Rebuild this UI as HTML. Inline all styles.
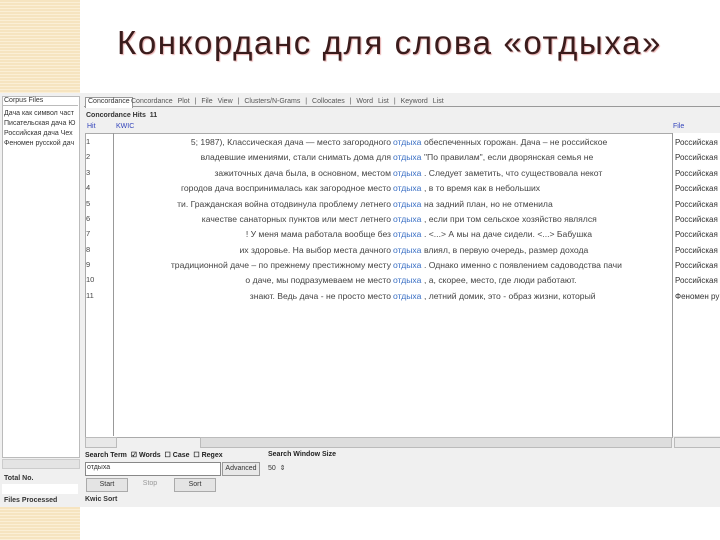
<!DOCTYPE html><html><head><meta charset="utf-8"><style>
body{margin:0;width:720px;height:540px;background:#fff;position:relative;overflow:hidden;font-family:"Liberation Sans",sans-serif}
.abs{position:absolute}
.beige{background:repeating-linear-gradient(180deg,#f6e4c0 0 2px,#fbefd6 2px 3px)}
.t{font-size:7px;color:#333;white-space:nowrap}
.row{position:absolute;left:86px;width:586px;height:15px;font-size:8.6px;color:#444;white-space:nowrap}
.row .n{position:absolute;left:0;font-size:7.5px}
.row .l{position:absolute;right:281px;text-align:right}
.row .k{position:absolute;left:307px;color:#3a6fc4}
.row .r{position:absolute;left:338px;width:246px;overflow:hidden}
.rr{position:absolute;left:675px;font-size:8px;color:#333}
</style></head><body>
<div class="abs beige" style="left:0;top:0;width:80px;height:93px"></div>
<div class="abs beige" style="left:0;top:507px;width:80px;height:33px"></div>
<div class="abs" style="left:117px;top:24px;font-size:33px;color:#3a1c1c;letter-spacing:1.6px;text-shadow:1px 1px 1px #e8b0b0">Конкорданс для слова «отдыха»</div>
<div class="abs" style="left:0;top:93px;width:720px;height:414px;background:#f0f0f0"></div>
<div class="abs" style="left:2px;top:96px;width:76px;height:360px;background:#fff;border:1px solid #bbb"></div>
<div class="abs t" style="left:4px;top:97px">Corpus Files</div>
<div class="abs" style="left:2px;top:105px;width:76px;height:1px;background:#bbb"></div>
<div class="abs t" style="left:4px;top:109px;line-height:10px">Дача как символ част<br>Писательская дача Ю<br>Российская дача Чех<br>Феномен русской дач</div>
<div class="abs" style="left:2px;top:459px;width:76px;height:8px;background:#e4e4e4;border:1px solid #ccc"></div>
<div class="abs t" style="left:4px;top:475px;font-weight:bold">Total No.</div>
<div class="abs" style="left:2px;top:484px;width:76px;height:10px;background:#fff"></div>
<div class="abs t" style="left:4px;top:497px;font-weight:bold">Files Processed</div>
<div class="abs" style="left:84px;top:96px;width:636px;height:10px;border-bottom:1px solid #999"></div>
<div class="abs t" style="left:85px;top:97px;background:#fff;border:1px solid #999;border-bottom:none;padding:0 2px;height:10px">Concordance</div>
<div class="abs t" style="left:131px;top:98px;color:#555;word-spacing:3px">Concordance Plot | File View | Clusters/N-Grams | Collocates | Word List | Keyword List</div>
<div class="abs t" style="left:86px;top:112px;font-weight:bold">Concordance Hits &nbsp;11</div>
<div class="abs t" style="left:87px;top:123px;color:#3344bb">Hit</div>
<div class="abs t" style="left:116px;top:123px;color:#3344bb">KWIC</div>
<div class="abs t" style="left:673px;top:123px;color:#3344bb">File</div>
<div class="abs" style="left:85px;top:133px;width:586px;height:303px;background:#fff;border:1px solid #aaa"></div>
<div class="abs" style="left:113px;top:133px;width:1px;height:303px;background:#999"></div>
<div class="abs" style="left:672px;top:133px;width:48px;height:303px;background:#fff;border-left:1px solid #999"></div>
<div class="row" style="top:137px"><span class="n">1</span><span class="l">5; 1987),  Классическая дача — место загородного</span><span class="k">отдыха</span><span class="r">обеспеченных горожан.  Дача – не российское</span></div>
<div class="row" style="top:152px"><span class="n">2</span><span class="l">владевшие имениями, стали снимать дома для</span><span class="k">отдыха</span><span class="r">"По правилам", если дворянская семья не</span></div>
<div class="row" style="top:168px"><span class="n">3</span><span class="l">зажиточных дача была, в основном, местом</span><span class="k">отдыха</span><span class="r">. Следует заметить, что существовала некот</span></div>
<div class="row" style="top:183px"><span class="n">4</span><span class="l">городов дача воспринималась как загородное место</span><span class="k">отдыха</span><span class="r">, в то время как в небольших</span></div>
<div class="row" style="top:199px"><span class="n">5</span><span class="l">ти. Гражданская война отодвинула проблему летнего</span><span class="k">отдыха</span><span class="r">на задний план, но не отменила</span></div>
<div class="row" style="top:214px"><span class="n">6</span><span class="l">качестве санаторных пунктов или мест летнего</span><span class="k">отдыха</span><span class="r">, если при том сельское хозяйство являлся</span></div>
<div class="row" style="top:229px"><span class="n">7</span><span class="l">! У меня мама работала вообще без</span><span class="k">отдыха</span><span class="r">. &lt;...&gt; А мы на даче сидели. &lt;...&gt; Бабушка</span></div>
<div class="row" style="top:245px"><span class="n">8</span><span class="l">их здоровье. На выбор места дачного</span><span class="k">отдыха</span><span class="r">влиял, в первую очередь, размер дохода</span></div>
<div class="row" style="top:260px"><span class="n">9</span><span class="l">традиционной даче – по прежнему престижному месту</span><span class="k">отдыха</span><span class="r">. Однако именно с появлением садоводства пачи</span></div>
<div class="row" style="top:275px"><span class="n">10</span><span class="l">о даче, мы подразумеваем не место</span><span class="k">отдыха</span><span class="r">, а, скорее, место, где люди работают.</span></div>
<div class="row" style="top:291px"><span class="n">11</span><span class="l">знают. Ведь дача - не просто место</span><span class="k">отдыха</span><span class="r">, летний домик, это - образ жизни, который</span></div>
<div class="rr" style="top:138px">Российская</div><div class="rr" style="top:153px">Российская</div><div class="rr" style="top:169px">Российская</div><div class="rr" style="top:184px">Российская</div><div class="rr" style="top:200px">Российская</div><div class="rr" style="top:215px">Российская</div><div class="rr" style="top:230px">Российская</div><div class="rr" style="top:246px">Российская</div><div class="rr" style="top:261px">Российская</div><div class="rr" style="top:276px">Российская</div><div class="rr" style="top:292px">Феномен ру</div>
<div class="abs" style="left:85px;top:437px;width:30px;height:9px;background:#e8e8e8;border:1px solid #bbb"></div>
<div class="abs" style="left:200px;top:437px;width:470px;height:9px;background:#ddd;border:1px solid #bbb"></div>
<div class="abs" style="left:674px;top:437px;width:46px;height:9px;background:#e8e8e8;border:1px solid #bbb"></div>
<div class="abs t" style="left:85px;top:451px;font-weight:bold;color:#222">Search Term &nbsp;☑ Words &nbsp;☐ Case &nbsp;☐ Regex</div>
<div class="abs t" style="left:268px;top:451px;font-weight:bold;color:#222">Search Window Size</div>
<div class="abs" style="left:85px;top:462px;width:134px;height:12px;background:#fff;border:1px solid #888"></div>
<div class="abs t" style="left:87px;top:464px">отдыха</div>
<div class="abs t" style="left:222px;top:462px;width:36px;height:12px;line-height:12px;text-align:center;background:#e8e8e8;border:1px solid #999">Advanced</div>
<div class="abs t" style="left:268px;top:464px">50 &nbsp;⇕</div>
<div class="abs t" style="left:86px;top:478px;width:40px;height:12px;line-height:12px;text-align:center;background:#e4e4e4;border:1px solid #aaa">Start</div>
<div class="abs t" style="left:130px;top:478px;width:40px;height:12px;line-height:12px;text-align:center;color:#999">Stop</div>
<div class="abs t" style="left:174px;top:478px;width:40px;height:12px;line-height:12px;text-align:center;background:#e4e4e4;border:1px solid #aaa">Sort</div>
<div class="abs t" style="left:85px;top:496px;font-weight:bold">Kwic Sort</div>
</body></html>
